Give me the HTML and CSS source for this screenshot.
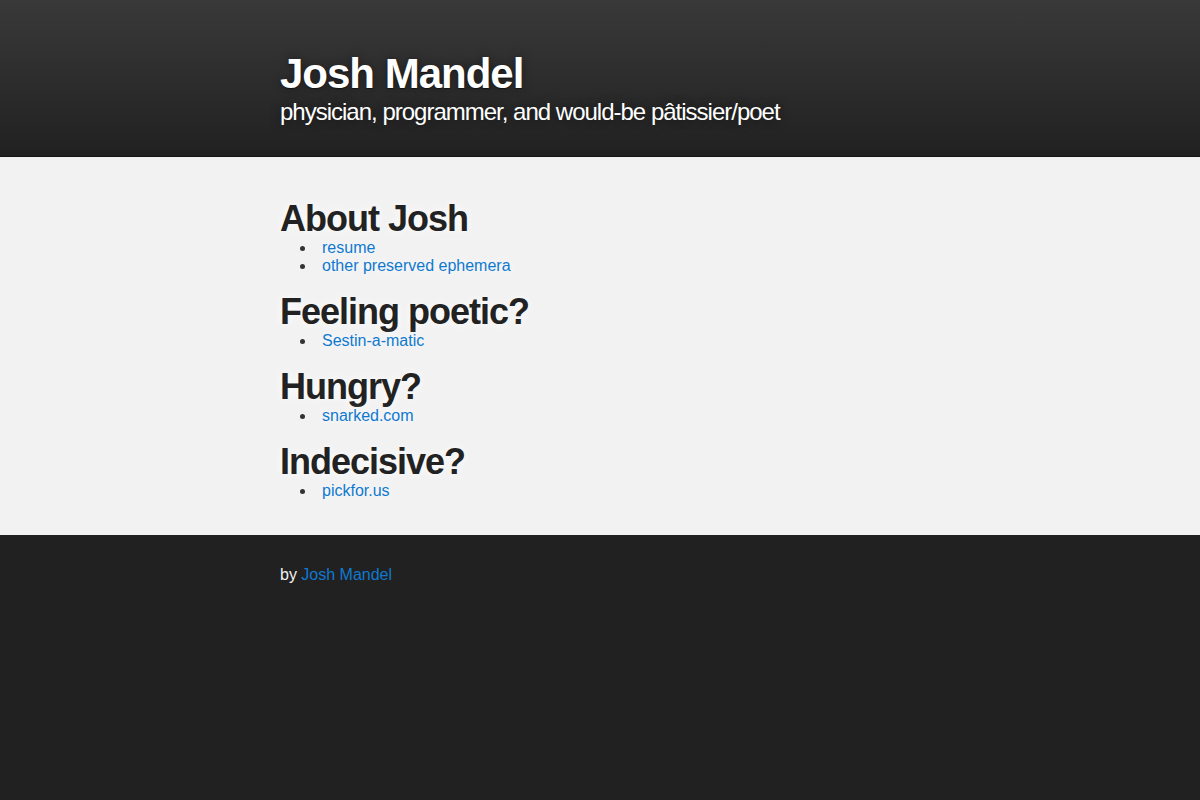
FILE: index.html
```html
<!DOCTYPE html>
<html>
<head>
<meta charset="utf-8">
<title>Josh Mandel</title>
<link rel="stylesheet" href="styles.css">
</head>
<body>
<header class="site-header">
  <div class="inner">
    <h1 class="site-title">Josh Mandel</h1>
    <p class="site-tagline">physician, programmer, and would-be pâtissier/poet</p>
  </div>
</header>
<main class="site-main">
  <div class="inner">
    <h2 class="section-title">About Josh</h2>
    <ul class="link-list">
      <li><a href="#">resume</a></li>
      <li><a href="#">other preserved ephemera</a></li>
    </ul>
    <h2 class="section-title">Feeling poetic?</h2>
    <ul class="link-list">
      <li><a href="#">Sestin-a-matic</a></li>
    </ul>
    <h2 class="section-title">Hungry?</h2>
    <ul class="link-list">
      <li><a href="#">snarked.com</a></li>
    </ul>
    <h2 class="section-title">Indecisive?</h2>
    <ul class="link-list">
      <li><a href="#">pickfor.us</a></li>
    </ul>
  </div>
</main>
<footer class="site-footer">
  <div class="inner">
    <p class="credit">by <a href="#">Josh Mandel</a></p>
  </div>
</footer>
</body>
</html>
```
FILE: styles.css
```css
html, body {
  margin: 0;
  padding: 0;
}
body {
  background: #212121;
  font-family: "Liberation Sans", Arial, sans-serif;
  font-size: 16px;
  color: #222;
}
.inner {
  width: 640px;
  margin: 0 auto;
}
a {
  color: #0f79d0;
  text-decoration: none;
}
.site-header {
  background: linear-gradient(to bottom, #393939 0%, #212121 100%);
  border-bottom: 1px solid #151515;
  height: 157px;
  box-sizing: border-box;
  padding-top: 50px;
}
.site-title {
  margin: 0;
  font-size: 42px;
  line-height: 48px;
  letter-spacing: -1px;
  font-weight: bold;
  color: #fff;
  text-shadow: 0 1px 1px rgba(0,0,0,0.5), 0 0 10px rgba(0,0,0,0.4);
}
.site-tagline {
  margin: 0;
  font-size: 24px;
  line-height: 28px;
  letter-spacing: -1px;
  color: #fff;
  text-shadow: 0 0 10px rgba(0,0,0,0.5);
}
.site-main {
  background: #f2f2f2;
  padding: 40px 0 20px;
}
.section-title {
  margin: 15px 0 0;
  padding-top: 1px;
  font-size: 36px;
  line-height: 41px;
  letter-spacing: -1px;
  font-weight: bold;
  color: #222;
  text-shadow: 0 0 10px #fff;
}
.section-title:first-child {
  margin-top: 0;
}
.link-list {
  margin: 0 0 15px;
  padding-left: 20px;
  list-style: none;
  line-height: 18px;
}
.link-list li {
  color: #222;
}
.link-list li::before {
  content: "";
  display: inline-block;
  width: 5px;
  height: 5px;
  border-radius: 50%;
  background: #333;
  margin-right: 17px;
  vertical-align: 2px;
}
.link-list a {
  text-shadow: 0 0 8px #fff;
}
.site-footer {
  padding: 31px 0 30px;
  color: #f2f2f2;
}
.credit {
  margin: 0;
  line-height: 18px;
}
.credit a {
  color: #0f79d0;
}
```
